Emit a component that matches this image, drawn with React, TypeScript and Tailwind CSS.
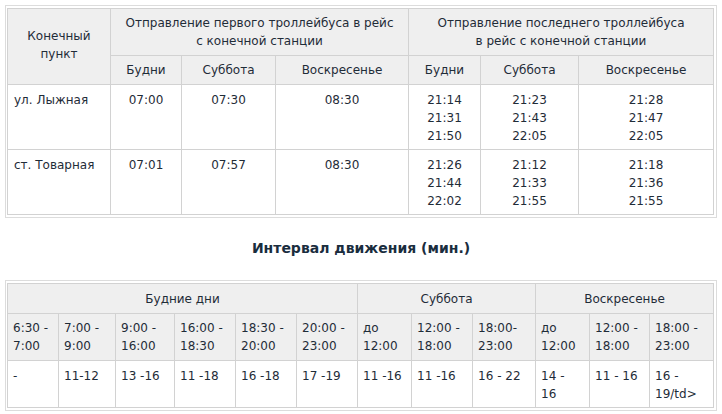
import React from 'react';

const firstRows = [
  {
    stop: 'ул. Лыжная',
    first: ['07:00', '07:30', '08:30'],
    last: [
      ['21:14', '21:31', '21:50'],
      ['21:23', '21:43', '22:05'],
      ['21:28', '21:47', '22:05'],
    ],
  },
  {
    stop: 'ст. Товарная',
    first: ['07:01', '07:57', '08:30'],
    last: [
      ['21:26', '21:44', '22:02'],
      ['21:12', '21:33', '21:55'],
      ['21:18', '21:36', '21:55'],
    ],
  },
];

const periods = [
  ['6:30 -', '7:00'],
  ['7:00 -', '9:00'],
  ['9:00 -', '16:00'],
  ['16:00 -', '18:30'],
  ['18:30 -', '20:00'],
  ['20:00 -', '23:00'],
  ['до', '12:00'],
  ['12:00 -', '18:00'],
  ['18:00-', '23:00'],
  ['до', '12:00'],
  ['12:00 -', '18:00'],
  ['18:00 -', '23:00'],
];

const intervals = [
  ['-'],
  ['11-12'],
  ['13 -16'],
  ['11 -18'],
  ['16 -18'],
  ['17 -19'],
  ['11 -16'],
  ['11 -16'],
  ['16 - 22'],
  ['14 -', '16'],
  ['11 - 16'],
  ['16 -', '19/td>'],
];

const topCols = [103, 71, 94, 133, 72, 98, 135];
const bottomCols = [51, 57, 59, 61, 61, 61, 54, 61, 63, 54, 60, 64];

const cell = 'border border-[#d2d2d2] font-normal';
const head = `${cell} bg-[#efefef]`;

export default function App() {
  return (
    <div
      className="min-h-[414px] w-[722px] bg-white pt-[5px] pl-[5px] text-[12px] leading-[18px] text-[#1f2c38]"
      style={{ fontFamily: '"DejaVu Sans", Verdana, sans-serif' }}
    >
      <div className="w-[712px] border border-[#dcdcdc] pt-[2px] pb-[2px] pl-px">
        <table className="table-fixed border-collapse w-[707px]">
          <colgroup>
            {topCols.map((w, i) => (
              <col key={i} style={{ width: w }} />
            ))}
          </colgroup>
          <thead>
            <tr className="h-[47px]">
              <th rowSpan={2} className={`${head} align-middle pb-[4px]`}>
                Конечный
                <br />
                пункт
              </th>
              <th colSpan={3} className={`${head} align-middle`}>
                Отправление первого троллейбуса в рейс
                <br />
                с конечной станции
              </th>
              <th colSpan={3} className={`${head} align-middle`}>
                Отправление последнего троллейбуса
                <br />
                в рейс с конечной станции
              </th>
            </tr>
            <tr className="h-[29px]">
              {['Будни', 'Суббота', 'Воскресенье', 'Будни', 'Суббота', 'Воскресенье'].map((d, i) => (
                <th key={i} className={`${head} align-middle`}>
                  {d}
                </th>
              ))}
            </tr>
          </thead>
          <tbody>
            {firstRows.map(row => (
              <tr key={row.stop} className="h-[65px]">
                <td className={`${cell} align-top pl-[6px] pt-[6px]`}>{row.stop}</td>
                {row.first.map((t, i) => (
                  <td key={i} className={`${cell} align-top text-center pt-[6px]`}>
                    {t}
                  </td>
                ))}
                {row.last.map((col, i) => (
                  <td key={i} className={`${cell} align-top text-center pt-[6px]`}>
                    {col.map(t => (
                      <div key={t}>{t}</div>
                    ))}
                  </td>
                ))}
              </tr>
            ))}
          </tbody>
        </table>
      </div>

      <h2 className="mt-[21px] mb-[22px] w-[712px] text-center text-[14px] font-bold leading-[19px] text-[#1a2d3e]">
        Интервал движения (мин.)
      </h2>

      <div className="w-[712px] border border-[#dcdcdc] pt-[2px] pb-[2px] pl-px">
        <table className="table-fixed border-collapse w-[707px]">
          <colgroup>
            {bottomCols.map((w, i) => (
              <col key={i} style={{ width: w }} />
            ))}
          </colgroup>
          <tbody>
            <tr className="h-[30px]">
              <td colSpan={6} className={`${head} text-center align-middle`}>
                Будние дни
              </td>
              <td colSpan={3} className={`${head} text-center align-middle`}>
                Суббота
              </td>
              <td colSpan={3} className={`${head} text-center align-middle`}>
                Воскресенье
              </td>
            </tr>
            <tr className="h-[47px]">
              {periods.map((p, i) => (
                <td key={i} className={`${head} align-middle px-[5px] whitespace-nowrap`}>
                  {p[0]}
                  <br />
                  {p[1]}
                </td>
              ))}
            </tr>
            <tr className="h-[47px]">
              {intervals.map((v, i) => (
                <td key={i} className={`${cell} align-top px-[5px] pt-[6px] whitespace-nowrap`}>
                  {v.map((t, j) => (
                    <div key={j}>{t}</div>
                  ))}
                </td>
              ))}
            </tr>
          </tbody>
        </table>
      </div>
    </div>
  );
}
